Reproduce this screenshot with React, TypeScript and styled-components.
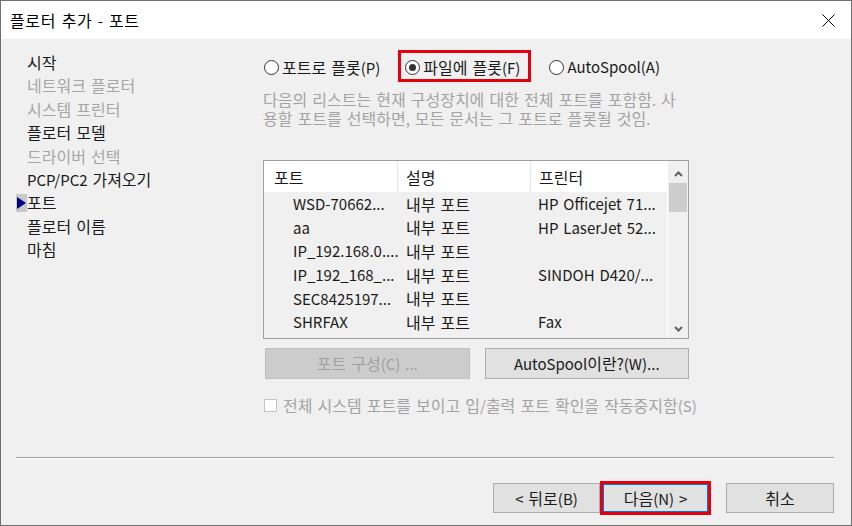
import React from "react";
import styled, { createGlobalStyle } from "styled-components";

const Global = createGlobalStyle`
  html, body { margin: 0; padding: 0; background: #f0f0f0; }
  body {
    font-family: "Noto Sans CJK KR", "Noto Sans", sans-serif;
    font-size: 15px;
    word-spacing: 1.5px;
    color: #1a1a1a;
  }
  * { box-sizing: border-box; }
`;

/* Hangul in the reference (Malgun Gothic) runs wider than Noto's at the same size */
const Hangul = styled.span`
  font-size: 16px;
`;

const HANGUL_RUN = /([\u3131-\uD7A3]+(?:\s+[\u3131-\uD7A3]+)*)/;

const ko = (text: string): React.ReactNode =>
  text.split(HANGUL_RUN).map((part, i) =>
    /[\u3131-\uD7A3]/.test(part) ? <Hangul key={i}>{part}</Hangul> : part
  );

const Window = styled.div`
  width: 852px;
  height: 526px;
  border: 1px solid #707070;
  display: flex;
  flex-direction: column;
  background: #f0f0f0;
  overflow: hidden;
`;

const TitleBar = styled.div`
  flex: none;
  height: 38px;
  background: #ffffff;
  display: flex;
  align-items: center;
  justify-content: space-between;
  padding: 0 16px 0 9px;
`;

const TitleText = styled.span`
  font-size: 15px;
  line-height: 20px;
  letter-spacing: 0.6px;
  color: #000;
  white-space: pre;
`;

const Body = styled.div`
  flex: 1;
  display: flex;
  flex-direction: column;
  min-height: 0;
`;

const Main = styled.div`
  flex: 1;
  display: flex;
  min-height: 0;
`;

const Sidebar = styled.nav`
  flex: none;
  width: 262px;
  padding: 12px 0 0 15px;
  display: flex;
  flex-direction: column;
`;

const NavItem = styled.div<{ $disabled?: boolean }>`
  display: flex;
  align-items: center;
  height: 23.4px;
  line-height: 23.4px;
  white-space: pre;
  color: ${(p) => (p.$disabled ? "#a6a6a6" : "#1a1a1a")};
`;

const Marker = styled.span<{ $on?: boolean }>`
  flex: none;
  width: 11px;
  height: 18px;
  display: flex;
  align-items: center;
  justify-content: center;
  background: ${(p) => (p.$on ? "#c9c9c9" : "transparent")};
`;

const Content = styled.div`
  flex: none;
  width: 426px;
  padding-top: 11px;
  display: flex;
  flex-direction: column;
`;

const RadioRow = styled.div`
  display: flex;
  align-items: center;
  gap: 18px;
  height: 32px;
  padding-left: 1px;
`;

const RadioOption = styled.label`
  display: inline-flex;
  align-items: center;
  gap: 3px;
  white-space: pre;
  line-height: 20px;
  padding-top: 2px;
  color: #1a1a1a;
`;

const RadioCircle = styled.span<{ $checked?: boolean }>`
  flex: none;
  width: 15px;
  height: 15px;
  border-radius: 50%;
  border: 1px solid #333;
  background: #fff;
  display: flex;
  align-items: center;
  justify-content: center;
  &::after {
    content: "";
    width: 7px;
    height: 7px;
    border-radius: 50%;
    background: ${(p) => (p.$checked ? "#333" : "transparent")};
  }
`;

const Highlight = styled.span`
  display: inline-flex;
  align-items: center;
  height: 32px;
  border: 3px solid #e3000f;
  padding: 0 8px 0 4px;
`;

const Description = styled.div`
  margin-top: 8px;
  line-height: 19px;
  color: #a3a3a3;
  white-space: pre;
`;

const DescLine = styled.div``;

const ListBox = styled.div`
  margin-top: 32px;
  width: 426px;
  height: 179px;
  border: 1px solid #a0a0a0;
  display: grid;
  grid-template-columns: 1fr 21px;
  background: #f0f0f0;
`;

const Table = styled.div`
  display: flex;
  flex-direction: column;
  min-width: 0;
`;

const HeaderRow = styled.div`
  display: grid;
  grid-template-columns: 134px 133px 1fr;
  height: 31px;
  background: #ffffff;
`;

const HeaderCell = styled.div<{ $pad: number; $last?: boolean }>`
  display: flex;
  align-items: center;
  padding-left: ${(p) => p.$pad}px;
  border-right: ${(p) => (p.$last ? "none" : "1px solid #e5e5e5")};
  color: #1a1a1a;
  white-space: pre;
`;

const Row = styled.div`
  display: grid;
  grid-template-columns: 134px 133px 1fr;
  height: 23.6px;
`;

const Cell = styled.div<{ $pad: number }>`
  display: flex;
  align-items: center;
  padding-left: ${(p) => p.$pad}px;
  white-space: pre;
  overflow: hidden;
  color: #1a1a1a;
`;

const ScrollBar = styled.div`
  display: flex;
  flex-direction: column;
  background: #f0f0f0;
  border-left: 1px solid #ffffff;
`;

const ScrollButton = styled.div`
  height: 22px;
  display: flex;
  align-items: center;
  justify-content: center;
  padding-top: 3px;
`;

const Thumb = styled.div`
  height: 29px;
  margin: 0 1px;
  background: #cdcdcd;
`;

const ScrollSpacer = styled.div`
  flex: 1;
`;

const ButtonRow = styled.div`
  margin-top: 9px;
  display: flex;
  gap: 15px;
  padding-left: 2px;
`;

const Button = styled.button<{ $w: number; $h: number; $disabled?: boolean; $focus?: boolean }>`
  width: ${(p) => p.$w}px;
  height: ${(p) => p.$h}px;
  font-family: inherit;
  font-size: 15px;
  word-spacing: 1.5px;
  line-height: 20px;
  padding: 0;
  display: flex;
  align-items: center;
  justify-content: center;
  white-space: pre;
  background: ${(p) => (p.$disabled ? "#cccccc" : "#e1e1e1")};
  border: ${(p) =>
    p.$focus ? "2px solid #0078d7" : p.$disabled ? "1px solid #bfbfbf" : "1px solid #adadad"};
  color: ${(p) => (p.$disabled ? "#a0a0a0" : "#1a1a1a")};
  outline: ${(p) => (p.$focus ? "3px solid #e3000f" : "none")};
  outline-offset: -1px;
`;

const CheckRow = styled.label`
  margin-top: 16px;
  height: 20px;
  display: flex;
  align-items: center;
  gap: 6px;
  padding-left: 1px;
  color: #a3a3a3;
  white-space: pre;
  line-height: 20px;
`;

const CheckBox = styled.span`
  flex: none;
  width: 13px;
  height: 13px;
  background: #ffffff;
  border: 1px solid #c4c4c4;
`;

const Footer = styled.div`
  flex: none;
  display: flex;
  flex-direction: column;
`;

const Separator = styled.div`
  height: 2px;
  margin: 0 17px 0 15px;
  border-top: 1px solid #a0a0a0;
  border-bottom: 1px solid #ffffff;
`;

const FooterButtons = styled.div`
  display: flex;
  justify-content: flex-end;
  align-items: center;
  padding: 24px 17px 12px 0;
`;

const NavGap = styled.span<{ $w: number }>`
  flex: none;
  width: ${(p) => p.$w}px;
`;

const CloseIcon = () => (
  <svg width="13" height="13" viewBox="0 0 13 13">
    <path d="M0.5 0.5 L12.5 12.5 M12.5 0.5 L0.5 12.5" stroke="#000" strokeWidth="1" fill="none" />
  </svg>
);

const Triangle = () => (
  <svg width="9" height="12" viewBox="0 0 9 12">
    <path d="M0 0 L9 6 L0 12 Z" fill="#000080" />
  </svg>
);

const Chevron = ({ up }: { up?: boolean }) => (
  <svg width="9" height="6" viewBox="0 0 9 6">
    <path
      d={up ? "M1 5 L4.5 1.5 L8 5" : "M1 1 L4.5 4.5 L8 1"}
      stroke="#606060"
      strokeWidth="2"
      fill="none"
    />
  </svg>
);

const navItems: { label: string; disabled?: boolean; current?: boolean }[] = [
  { label: "시작" },
  { label: "네트워크 플로터", disabled: true },
  { label: "시스템 프린터", disabled: true },
  { label: "플로터 모델" },
  { label: "드라이버 선택", disabled: true },
  { label: "PCP/PC2 가져오기" },
  { label: "포트", current: true },
  { label: "플로터 이름" },
  { label: "마침" },
];

const rows = [
  ["WSD-70662...", "내부 포트", "HP Officejet 71..."],
  ["aa", "내부 포트", "HP LaserJet 52..."],
  ["IP_192.168.0....", "내부 포트", ""],
  ["IP_192_168_...", "내부 포트", "SINDOH D420/..."],
  ["SEC8425197...", "내부 포트", ""],
  ["SHRFAX", "내부 포트", "Fax"],
];

export default function App() {
  return (
    <>
      <Global />
      <Window>
        <TitleBar>
          <TitleText>{ko("플로터 추가 - 포트")}</TitleText>
          <CloseIcon />
        </TitleBar>
        <Body>
          <Main>
            <Sidebar>
              {navItems.map((n) => (
                <NavItem key={n.label} $disabled={n.disabled}>
                  <Marker $on={n.current}>{n.current ? <Triangle /> : null}</Marker>
                  <span>{ko(n.label)}</span>
                </NavItem>
              ))}
            </Sidebar>
            <Content>
              <RadioRow>
                <RadioOption>
                  <RadioCircle />
                  <span>{ko("포트로 플롯(P)")}</span>
                </RadioOption>
                <Highlight>
                  <RadioOption>
                    <RadioCircle $checked />
                    <span>{ko("파일에 플롯(F)")}</span>
                  </RadioOption>
                </Highlight>
                <RadioOption>
                  <RadioCircle />
                  <span>AutoSpool(A)</span>
                </RadioOption>
              </RadioRow>
              <Description>
                <DescLine>{ko("다음의 리스트는 현재 구성장치에 대한 전체 포트를 포함함. 사")}</DescLine>
                <DescLine>{ko("용할 포트를 선택하면, 모든 문서는 그 포트로 플롯될 것임.")}</DescLine>
              </Description>
              <ListBox>
                <Table>
                  <HeaderRow>
                    <HeaderCell $pad={10}>{ko("포트")}</HeaderCell>
                    <HeaderCell $pad={8}>{ko("설명")}</HeaderCell>
                    <HeaderCell $pad={8} $last>
                      {ko("프린터")}
                    </HeaderCell>
                  </HeaderRow>
                  {rows.map((r) => (
                    <Row key={r[0]}>
                      <Cell $pad={29}>{r[0]}</Cell>
                      <Cell $pad={8}>{ko(r[1])}</Cell>
                      <Cell $pad={7}>{r[2]}</Cell>
                    </Row>
                  ))}
                </Table>
                <ScrollBar>
                  <ScrollButton>
                    <Chevron up />
                  </ScrollButton>
                  <Thumb />
                  <ScrollSpacer />
                  <ScrollButton>
                    <Chevron />
                  </ScrollButton>
                </ScrollBar>
              </ListBox>
              <ButtonRow>
                <Button $w={205} $h={31} $disabled>
                  <span>{ko("포트 구성(C) ...")}</span>
                </Button>
                <Button $w={205} $h={31}>
                  <span>{ko("AutoSpool이란?(W)...")}</span>
                </Button>
              </ButtonRow>
              <CheckRow>
                <CheckBox />
                <span>{ko("전체 시스템 포트를 보이고 입/출력 포트 확인을 작동중지함(S)")}</span>
              </CheckRow>
            </Content>
          </Main>
          <Footer>
            <Separator />
            <FooterButtons>
              <Button $w={107} $h={30}>
                <span>{ko("< 뒤로(B)")}</span>
              </Button>
              <NavGap $w={2} />
              <Button $w={107} $h={30} $focus>
                <span>{ko("다음(N) >")}</span>
              </Button>
              <NavGap $w={17} />
              <Button $w={108} $h={30}>
                <span>{ko("취소")}</span>
              </Button>
            </FooterButtons>
          </Footer>
        </Body>
      </Window>
    </>
  );
}
